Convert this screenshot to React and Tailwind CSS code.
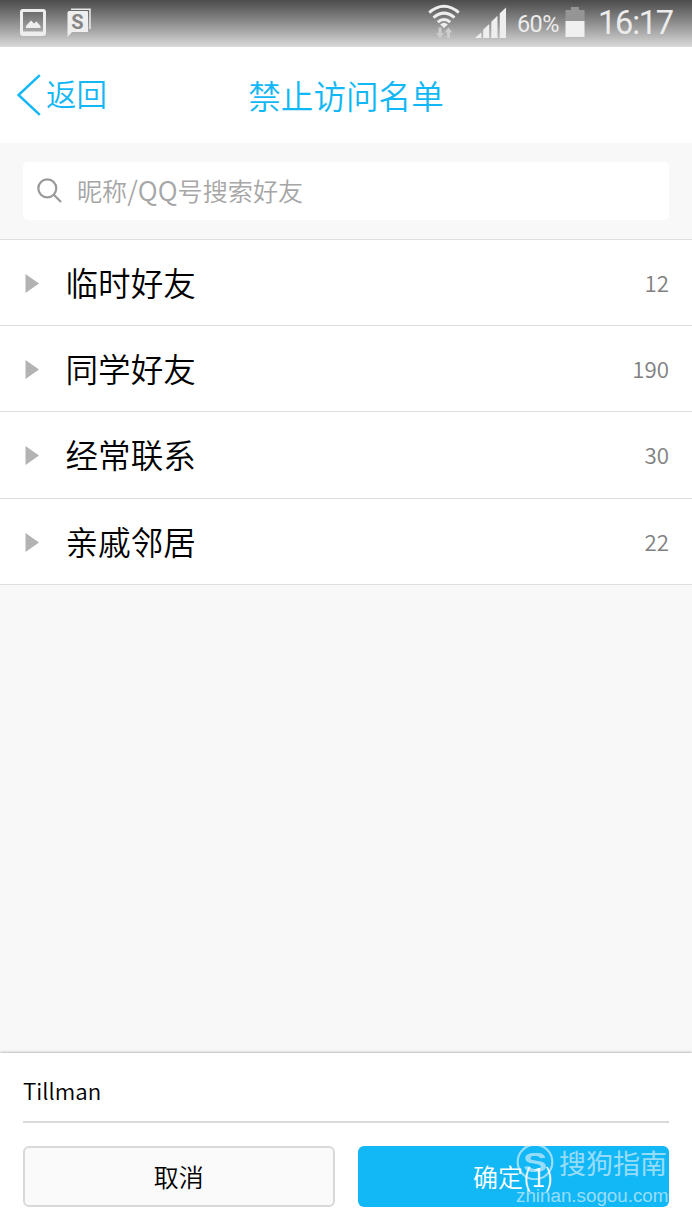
import React from "react";

const groups = [
  { name: "临时好友", count: 12, size: "h-[86px]" },
  { name: "同学好友", count: 190, size: "h-[86px]" },
  { name: "经常联系", count: 30, size: "h-[87px]" },
  { name: "亲戚邻居", count: 22, size: "h-[86px]" },
];

const StatusBar = () => {
  return (
    <div className="flex h-[47px] shrink-0 items-start bg-linear-to-b from-[#4c4c4c] to-[#dadada] font-['Roboto',sans-serif] text-[#ececec]">
      <svg className="ml-5 mt-[8px] h-7 w-[26px]" viewBox="0 0 26 28">
        <path
          fillRule="evenodd"
          fill="#eeeeee"
          d="M3 1H23Q26 1 26 4V25Q26 28 23 28H3Q0 28 0 25V4Q0 1 3 1ZM3 4V23.5H23V4Z"
        />
        <path fill="#eeeeee" d="M6 20V18L11 12.5L14 15.5L16.5 13.5L20.5 18V20Z" />
      </svg>
      <svg className="ml-[21px] mt-[8px] h-[29px] w-6" viewBox="0 0 24 29">
        <path fill="none" stroke="#e6e6e6" strokeWidth="1.6" d="M4 1.3H23V21" />
        <path fill="#eeeeee" d="M2 3H20Q21 3 21 4V24H5L0.5 29V5Q.5 3 2 3Z" />
        <text
          x="10.5"
          y="20.5"
          textAnchor="middle"
          fontSize="20"
          fontWeight="700"
          fill="#858585"
          fontFamily="Roboto"
        >
          S
        </text>
      </svg>

      <svg className="ml-auto mt-[4px] h-[35px] w-8" viewBox="0 0 32 35">
        <g fill="none" stroke="#eeeeee" strokeWidth="3">
          <path d="M1.2 8.6Q16 -4 30.8 8.6" />
          <path d="M5.5 13.6Q16 4.6 26.5 13.6" />
          <path d="M9.8 18.2Q16 12.7 22.2 18.2" />
        </g>
        <path fill="#eeeeee" d="M12.2 20.5Q16 17 19.8 20.5L16 24Z" />
        <path
          fill="#cccccc"
          d="M10.5 23.5H13.5V29H16L12 34L8 29H10.5ZM19 34V28.5H16.5L20.5 23.5L24.5 28.5H22V34Z"
        />
      </svg>
      <svg className="ml-[15px] mt-[7px] h-[31px] w-8" viewBox="0 0 32 31">
        <path
          fill="#eeeeee"
          d="M0 31L6.3 25.5V31ZM8.2 31V22.8L14.2 17V31ZM16.3 31V14.8L22.5 8.8V31ZM24.7 31V6.5L31 .5V31Z"
        />
      </svg>
      <span className="ml-[10px] mt-[8px] w-[42px] text-[23.5px] leading-8 tracking-[-0.6px]">60%</span>
      <svg className="ml-[6px] mt-[7px] h-[30px] w-5" viewBox="0 0 20 30">
        <path fill="#959595" d="M6 0H14V3H19.5V14H.5V3H6Z" />
        <path fill="#f0f0f0" d="M.5 14H19.5V30H.5Z" />
      </svg>
      <span className="ml-[13px] mt-[3px] w-[94px] text-[32.5px] leading-10 tracking-[-1.2px]">16:17</span>
    </div>
  );
};

const Header = () => {
  return (
    <div className="grid h-24 shrink-0 grid-cols-[1fr_auto_1fr] items-center bg-white text-[#12b7f5]">
      <div className="flex items-center pl-[17px]">
        <svg className="h-[42px] w-[24px]" viewBox="0 0 24 42">
          <path d="M22.8 1.2L1.5 21L22.8 40.8" fill="none" stroke="currentColor" strokeWidth="2.5" />
        </svg>
        <span className="mb-[5px] ml-[5px] text-[30.4px] font-[350] leading-10">返回</span>
      </div>
      <h1 className="text-[32.6px] font-[350] leading-10">禁止访问名单</h1>
    </div>
  );
};

const SearchBar = () => {
  return (
    <div className="h-24 shrink-0 px-[23px] pt-[19px]">
      <div className="flex h-[58px] items-center rounded-[5px] bg-white pl-[14px] text-[#a6a6a6]">
        <svg className="mb-[2px] h-[25px] w-[25px]" viewBox="0 0 25 25" fill="none" stroke="#999999" strokeWidth="2.2">
          <circle cx="10.3" cy="10.3" r="9" />
          <path d="M16.8 16.8L24 24" />
        </svg>
        <span className="mb-[2px] ml-[15px] text-[25.1px] font-[350] leading-9">
          昵称<span className="text-[27px]">/QQ</span>号搜索好友
        </span>
      </div>
    </div>
  );
};

const GroupList = () => {
  return (
    <div className="shrink-0 border-t border-[#dedede]">
      {groups.map((group) => (
        <div
          key={group.name}
          className={`${group.size} flex items-center border-b border-[#dedede] bg-white pl-[25px] pr-[23px]`}
        >
          <svg className="mt-px h-[19px] w-[14px]" viewBox="0 0 14 19">
            <path d="M.5 0L14 9.5L.5 19Z" fill="#b3b3b3" />
          </svg>
          <span className="mb-[2px] ml-[26.5px] text-[32.6px] font-[350] leading-10 text-black">{group.name}</span>
          <span className="mb-[2px] ml-auto text-[22.3px] font-[350] leading-8 text-[#808080]">{group.count}</span>
        </div>
      ))}
    </div>
  );
};

const Watermark = () => {
  return (
    <div className="absolute right-0 -top-[5px] w-[153px] text-[rgba(240,246,252,0.62)]">
      <div className="flex items-center">
        <svg className="h-[38px] w-[38px]" viewBox="0 0 38 38">
          <circle cx="19" cy="20" r="17.3" fill="none" stroke="currentColor" strokeWidth="2.2" />
          <text
            x="19"
            y="30"
            textAnchor="middle"
            fontSize="27"
            fontWeight="700"
            fill="currentColor"
            fontFamily="Liberation Sans"
            textLength="24"
            lengthAdjust="spacingAndGlyphs"
          >
            S
          </text>
        </svg>
        <span className="mt-[4px] ml-[5px] whitespace-nowrap text-[27px] leading-9">搜狗指南</span>
      </div>
      <p className="mt-[3px] font-['Liberation_Sans',sans-serif] text-[18.8px] leading-6">zhinan.sogou.com</p>
    </div>
  );
};

const BottomPanel = () => {
  return (
    <div className="mt-auto h-[177px] shrink-0 bg-white px-[23px] shadow-[0_0_3px_rgba(0,0,0,0.45)]">
      <p className="h-[70px] border-b-2 border-[#d9d9d9] pt-[21px] text-[22.3px] font-[350] leading-8 text-black">
        Tillman
      </p>
      <div className="mt-[23px] grid grid-cols-2 gap-[23px]">
        <button className="h-[61px] rounded-md border-2 border-[#d9d9d9] bg-[#fafafa] text-[25px] font-[350] text-black">
          取消
        </button>
        <div className="relative">
          <button className="h-[61px] w-full rounded-md bg-[#12b7f5] text-[25px] font-[350] text-white">
            确定(1)
          </button>
          <Watermark />
        </div>
      </div>
    </div>
  );
};

const App = () => {
  return (
    <div className="flex h-[1230px] w-[692px] flex-col overflow-hidden bg-[#f8f8f8] font-['Noto_Sans_CJK_SC',sans-serif]">
      <StatusBar />
      <Header />
      <SearchBar />
      <GroupList />
      <BottomPanel />
    </div>
  );
};

export default App;
